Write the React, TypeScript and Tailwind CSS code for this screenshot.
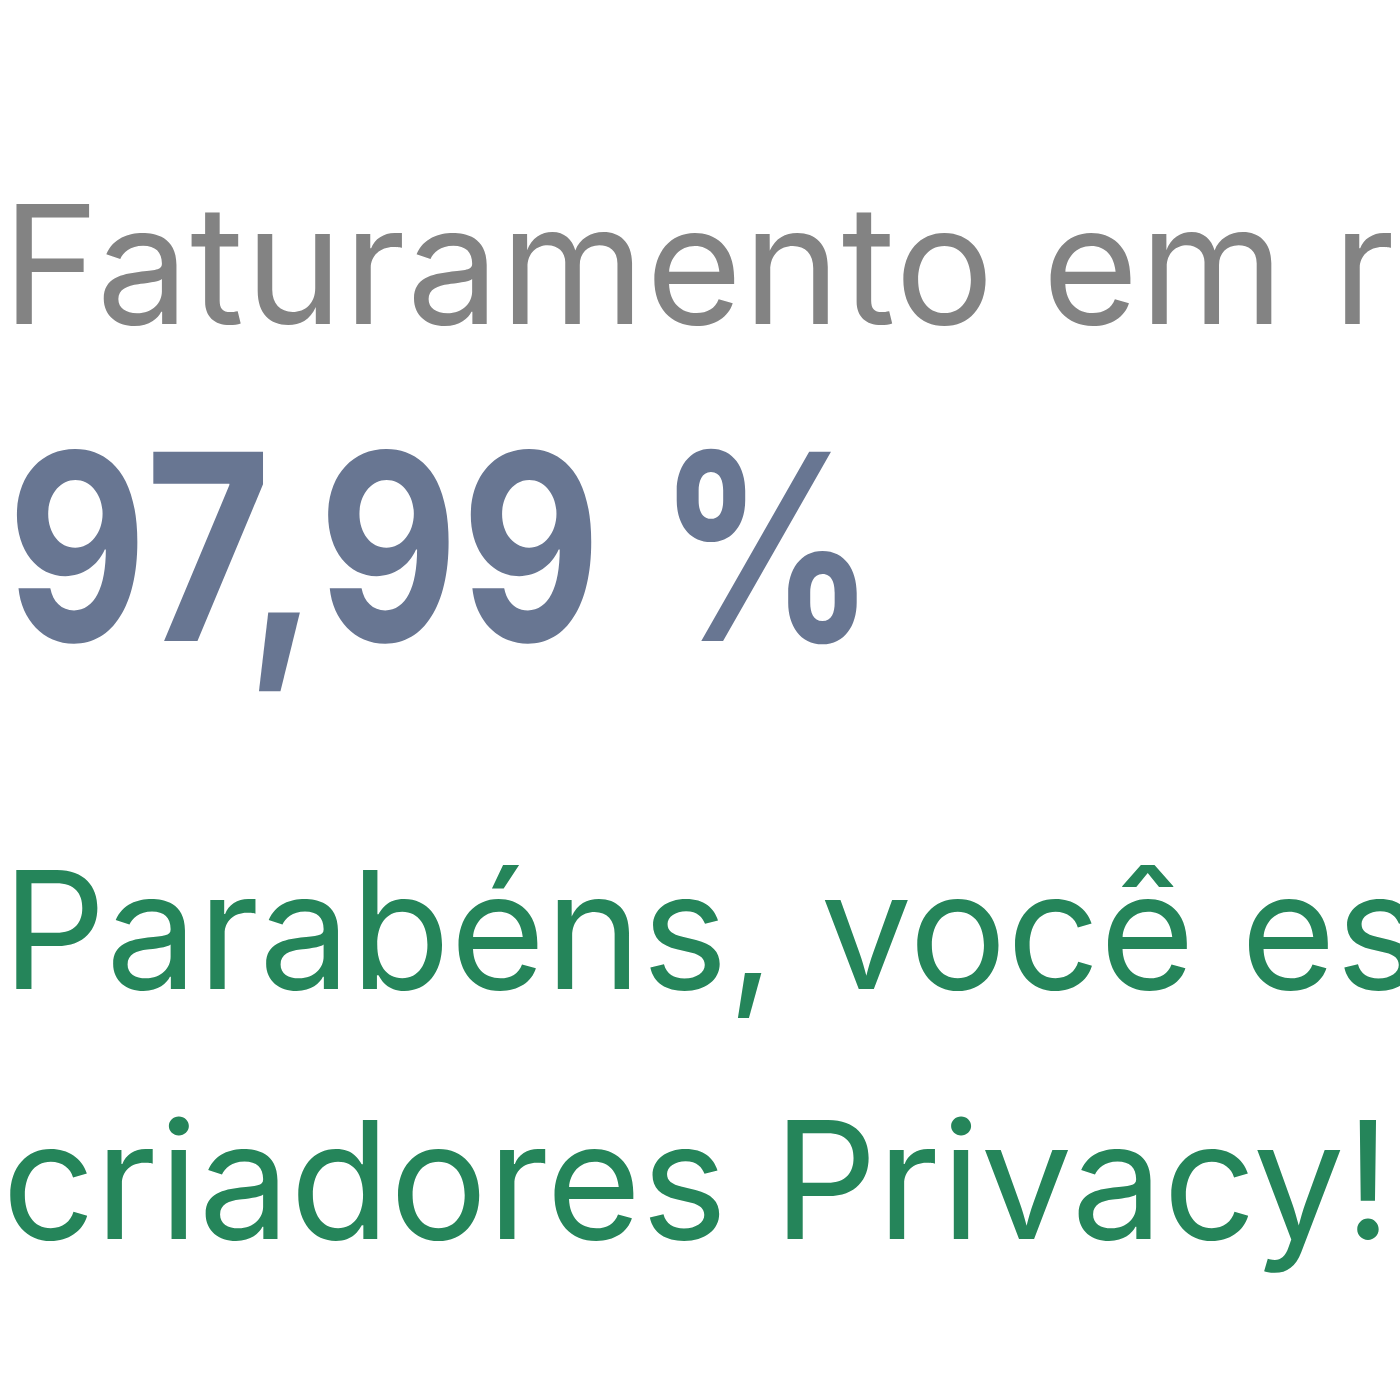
import React from "react";

export default function App() {
  return (
    <div
      className="w-[1400px] h-[1400px] overflow-hidden bg-white"
      style={{ fontFamily: "Inter, 'Noto Sans', sans-serif" }}
    >
      <div className="w-[2400px] pt-[182px] pl-[2px]">
        <div className="text-[165px] leading-none tracking-[1px] text-[#838383] whitespace-nowrap font-normal">
          Faturamento em relação aos demais criadores
        </div>
        <div className="mt-[70px] h-[260px] pl-[5px]">
          <div className="inline-block origin-left scale-x-[0.83] text-[260px] leading-none font-bold tracking-[3px] text-[#687692] whitespace-nowrap">
            97,99 %
          </div>
        </div>
        <div className="mt-[128px] text-[163px] leading-[250px] text-[#25855a] font-normal whitespace-nowrap">
          <div>Parabéns, você está entre os melhores</div>
          <div>criadores Privacy!</div>
        </div>
      </div>
    </div>
  );
}
